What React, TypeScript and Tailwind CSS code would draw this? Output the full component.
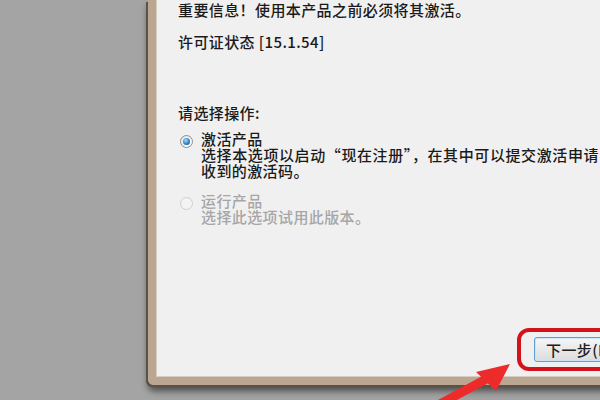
import React from 'react';

const FONT = '"Noto Sans CJK SC", "Noto Sans", sans-serif';

function Radio({ checked, disabled }: { checked?: boolean; disabled?: boolean }) {
  return (
    <span
      className={
        'mt-[4px] flex h-[13px] w-[13px] shrink-0 items-center justify-center rounded-full border ' +
        (disabled
          ? 'border-[#cfcfcf] bg-[#f3f3f3]'
          : 'border-[#8e8e8e] bg-gradient-to-br from-[#e4e4e4] to-[#ffffff]')
      }
    >
      {checked && (
        <span className="h-[7px] w-[7px] rounded-full bg-[radial-gradient(circle_at_40%_35%,#9fdcff_0%,#2a86c8_55%,#10487a_100%)]" />
      )}
    </span>
  );
}

export default function App() {
  return (
    <div
      className="relative h-[400px] w-[600px] overflow-hidden bg-[#a4a4a4] pl-[148px]"
      style={{ fontFamily: FONT }}
    >
      {/* dialog window */}
      <div className="h-[385px] w-[480px] rounded-bl-[6px] border-b-[8px] border-l-[8px] border-[#bba791] shadow-[-2px_2px_0_#5a534c,0_6px_7px_rgba(0,0,0,0.55)]">
        <div className="flex h-full flex-col border-b border-l border-[#d8cdc1] bg-[#f0f0f0] pl-[21px] text-[15px] font-medium tracking-[0.4px] text-[#1a1a1a]">
          <p className="leading-[20px]">重要信息！使用本产品之前必须将其激活。</p>
          <p className="mt-[12px] leading-[20px]">许可证状态 [15.1.54]</p>
          <p className="mt-[51px] leading-[20px]">请选择操作:</p>

          <div className="mt-[8px] flex gap-[8px] pl-[2px]">
            <Radio checked />
            <div className="leading-[16px]">
              <p>激活产品</p>
              <p className="whitespace-nowrap tracking-[0.6px]">选择本选项以启动“现在注册”，在其中可以提交激活申请</p>
              <p>收到的激活码。</p>
            </div>
          </div>

          <div className="mt-[14px] flex gap-[8px] pl-[2px] text-[#a6a6a6]">
            <Radio disabled />
            <div className="leading-[16px]">
              <p>运行产品</p>
              <p>选择此选项试用此版本。</p>
            </div>
          </div>

          <div className="mb-[5px] mt-auto pl-[339px]">
            <div className="w-[110px] rounded-[12px] border-[4px] border-[#d3131c] py-[5px] pl-[13px]">
              <button className="flex h-[25px] w-[92px] items-center rounded-[3px] border border-[#5d9fd3] bg-gradient-to-b from-[#f6f6f6] to-[#dcdcdc] pl-[11px] text-[15px] leading-none text-[#202020] shadow-[inset_0_0_0_1px_#c9e6fb]">
                下一步(N)
              </button>
            </div>
          </div>
        </div>
      </div>

      {/* red annotation arrow */}
      <svg className="absolute left-0 top-0" width="600" height="400" viewBox="0 0 600 400">
        <line x1="440" y1="404" x2="490" y2="377" stroke="#ee2b2b" strokeWidth="9" />
        <polygon points="510,364 476,372 496,391" fill="#ee2b2b" />
      </svg>
    </div>
  );
}
